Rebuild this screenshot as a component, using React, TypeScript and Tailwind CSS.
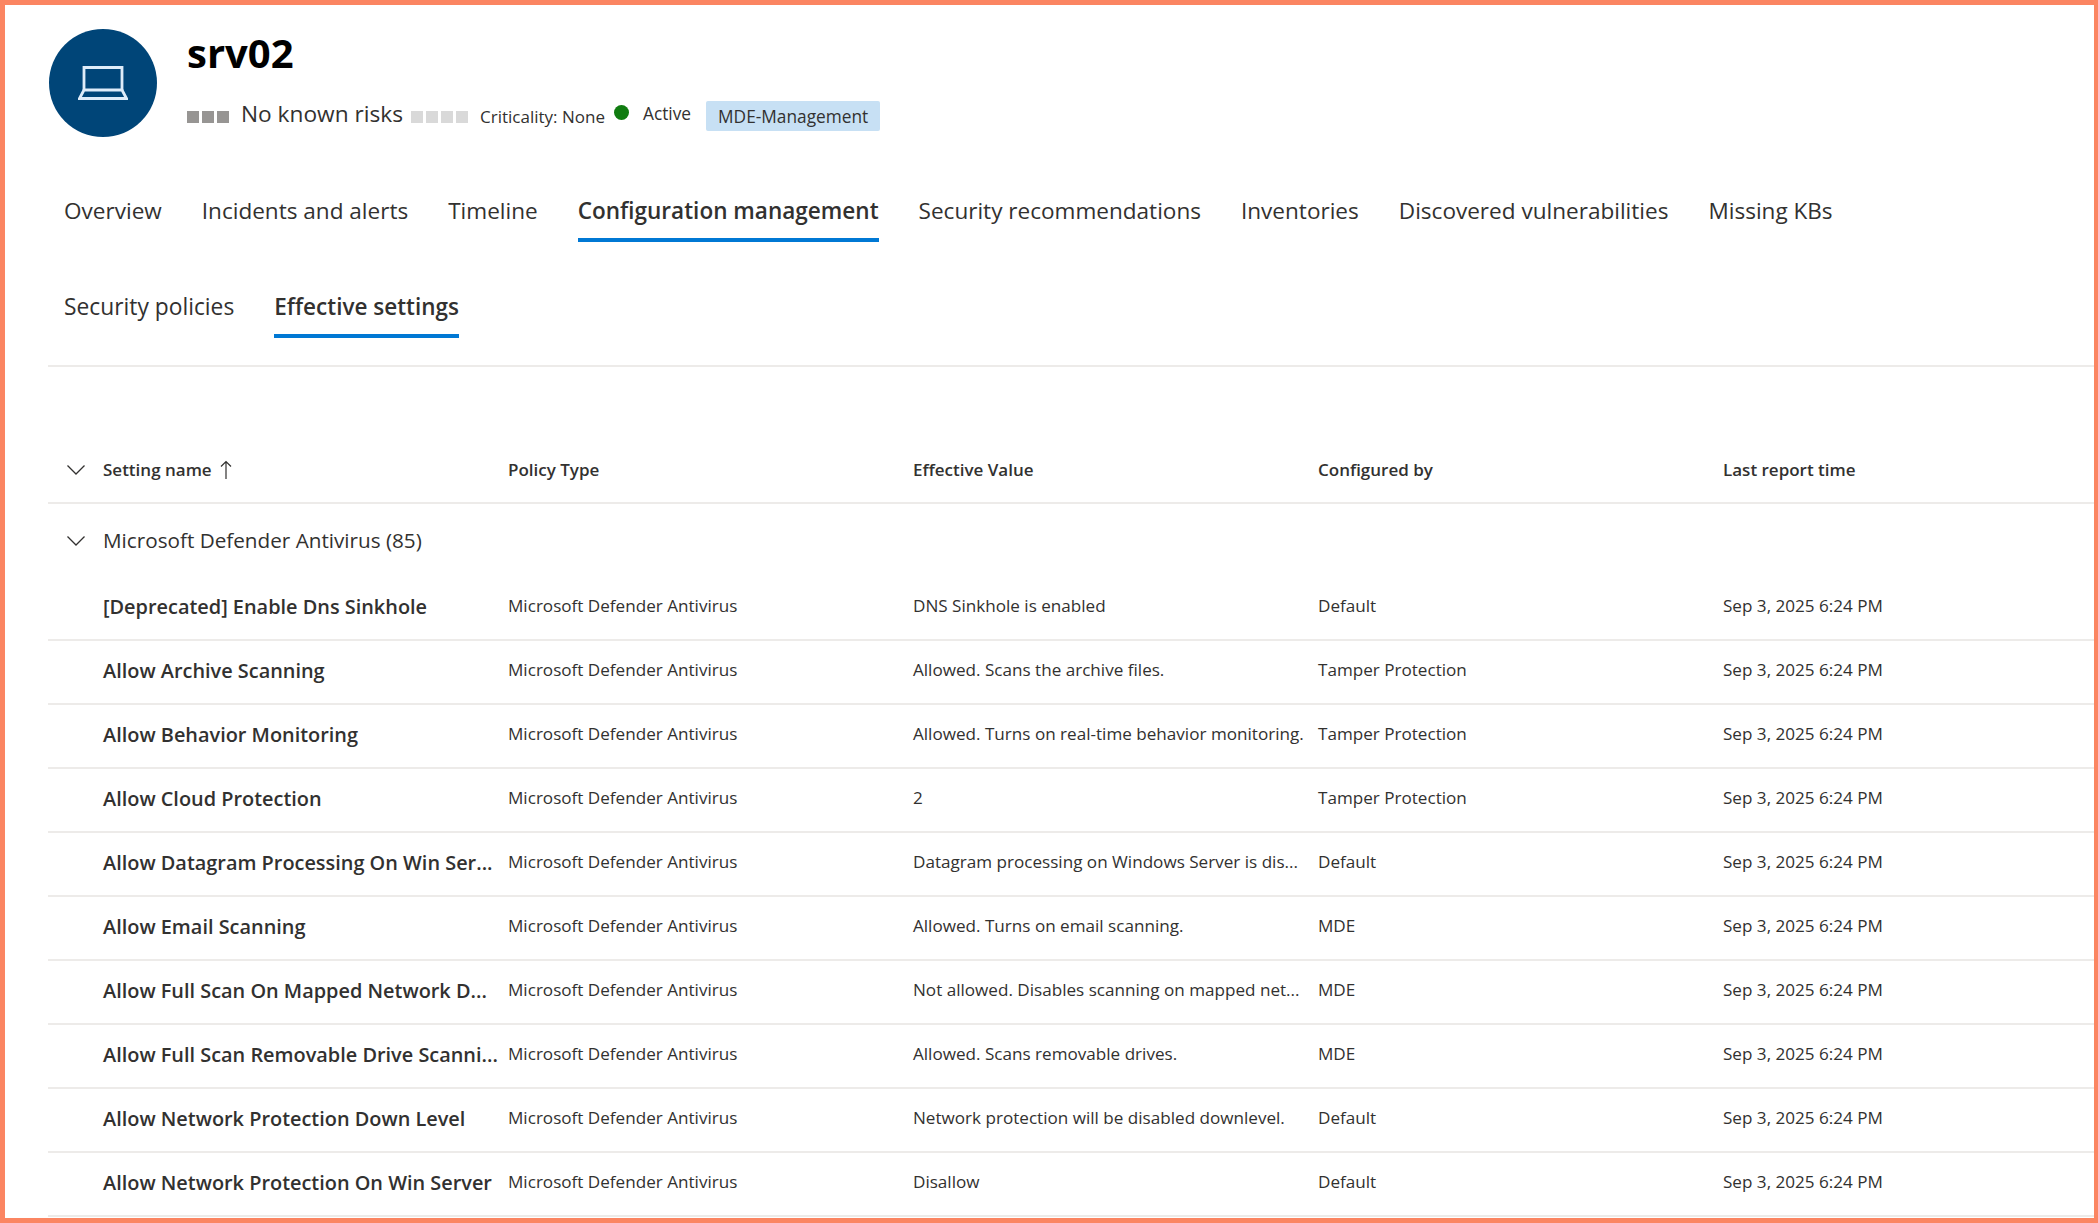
import React from 'react';

const FONT = "font-['Open_Sans','Noto_Sans',sans-serif]";

const mainTabs = [
  { label: 'Overview' },
  { label: 'Incidents and alerts' },
  { label: 'Timeline' },
  { label: 'Configuration management', active: true },
  { label: 'Security recommendations' },
  { label: 'Inventories' },
  { label: 'Discovered vulnerabilities' },
  { label: 'Missing KBs' },
];

const rows = [
  ['[Deprecated] Enable Dns Sinkhole', 'DNS Sinkhole is enabled', 'Default'],
  ['Allow Archive Scanning', 'Allowed. Scans the archive files.', 'Tamper Protection'],
  ['Allow Behavior Monitoring', 'Allowed. Turns on real-time behavior monitoring.', 'Tamper Protection'],
  ['Allow Cloud Protection', '2', 'Tamper Protection'],
  ['Allow Datagram Processing On Win Ser...', 'Datagram processing on Windows Server is dis...', 'Default'],
  ['Allow Email Scanning', 'Allowed. Turns on email scanning.', 'MDE'],
  ['Allow Full Scan On Mapped Network D...', 'Not allowed. Disables scanning on mapped net...', 'MDE'],
  ['Allow Full Scan Removable Drive Scanni...', 'Allowed. Scans removable drives.', 'MDE'],
  ['Allow Network Protection Down Level', 'Network protection will be disabled downlevel.', 'Default'],
  ['Allow Network Protection On Win Server', 'Disallow', 'Default'],
];

const Chevron = () => (
  <svg width="20" height="12" viewBox="0 0 20 12" fill="none" stroke="#323130" strokeWidth="1.3">
    <path d="M1.5 1.5 L10 10 L18.5 1.5" />
  </svg>
);

const Squares = ({ count, color }: { count: number; color: string }) => (
  <div className="mt-[6px] flex gap-[3px]">
    {Array.from({ length: count }).map((_, i) => (
      <div key={i} className={`h-[12px] w-[12px] ${color}`} />
    ))}
  </div>
);

export default function App() {
  return (
    <div className={`h-[1223px] w-[2098px] overflow-hidden border-t-[5px] border-r-[4px] border-b-[5px] border-l-[5px] border-[#fb8562] bg-white text-[#323130] ${FONT}`}>
      {/* Device header */}
      <div className="flex pl-[44px] pt-[24px]">
        <div className="flex h-[108px] w-[108px] items-center justify-center rounded-full bg-[#004578]">
          <svg width="50" height="34" viewBox="0 0 50 34" fill="none" stroke="#deecf9" strokeWidth="2.8">
            <path d="M6 24 V1.5 H44 V24" />
            <path d="M6 24 H44 L48.5 32.5 H1.5 Z" />
          </svg>
        </div>
        <div className="ml-[30px]">
          <div className="h-[64px] pt-[2px] text-[40px] leading-[44px] font-bold text-black">srv02</div>
          <div className="flex h-[42px] items-center">
            <Squares count={3} color="bg-[#979593]" />
            <span className="ml-[12px] text-[22.7px] leading-[30px]">No known risks</span>
            <div className="ml-[8px]"><Squares count={4} color="bg-[#d9d9d9]" /></div>
            <span className="ml-[12px] pt-[5px] text-[17px] leading-[24px]">Criticality: None</span>
            <div className="mb-[4px] ml-[9px] h-[15px] w-[15px] rounded-full bg-[#107c10]" />
            <span className="ml-[14px] text-[17.3px] leading-[24px]">Active</span>
            <span className="ml-[15px] mt-[4px] rounded-[2px] bg-[#c7e0f4] px-[12px] pt-[1px] text-[17.3px] leading-[29px]">MDE-Management</span>
          </div>
        </div>
      </div>

      {/* Main tabs */}
      <div className="mt-[51px] flex gap-[40px] pl-[59px]">
        {mainTabs.map((tab) => (
          <div
            key={tab.label}
            className={`h-[54px] whitespace-nowrap border-b-[4px] pt-[7px] text-[22.55px] leading-[32px] ${tab.active ? 'border-[#0078d4] font-semibold' : 'border-transparent'}`}
          >
            {tab.label}
          </div>
        ))}
      </div>

      {/* Sub tabs */}
      <div className="ml-[43px] mt-[42px] flex gap-[40px] border-b-[2px] border-[#edebe9] pb-[27px] pl-[16px]">
        <div className="h-[54px] whitespace-nowrap border-b-[4px] border-transparent pt-[7px] text-[22.8px] leading-[32px]">Security policies</div>
        <div className="h-[54px] whitespace-nowrap border-b-[4px] border-[#0078d4] pt-[7px] text-[22.5px] leading-[32px] font-semibold">Effective settings</div>
      </div>

      {/* Table */}
      <div className="ml-[43px]">
        <div className="mt-[71px] flex h-[66px] items-center border-b-[2px] border-[#edebe9] text-[17px] font-semibold">
          <div className="flex w-[460px] items-center">
            <div className="ml-[18px] flex w-[37px]"><Chevron /></div>
            <span>Setting name</span>
            <svg className="ml-[8px]" width="12" height="20" viewBox="0 0 12 20" fill="none" stroke="#323130" strokeWidth="1.2">
              <path d="M6 19 V1.5 M1 6.5 L6 1.5 L11 6.5" />
            </svg>
          </div>
          <div className="w-[405px]">Policy Type</div>
          <div className="w-[405px]">Effective Value</div>
          <div className="w-[405px]">Configured by</div>
          <div>Last report time</div>
        </div>
        <div className="flex h-[73px] items-center pt-[1px]">
          <div className="ml-[18px] flex w-[37px]"><Chevron /></div>
          <span className="text-[20.7px] font-medium">Microsoft Defender Antivirus (85)</span>
        </div>
        {rows.map(([name, value, by]) => (
          <div key={name} className="flex h-[64px] items-center border-b-[2px] border-[#edebe9] pb-[5px] text-[17.1px] whitespace-nowrap">
            <div className="w-[460px] pl-[55px] pt-[2px] text-[19.9px] font-semibold">{name}</div>
            <div className="w-[405px]">Microsoft Defender Antivirus</div>
            <div className="w-[405px]">{value}</div>
            <div className="w-[405px]">{by}</div>
            <div>Sep 3, 2025 6:24 PM</div>
          </div>
        ))}
      </div>
    </div>
  );
}
